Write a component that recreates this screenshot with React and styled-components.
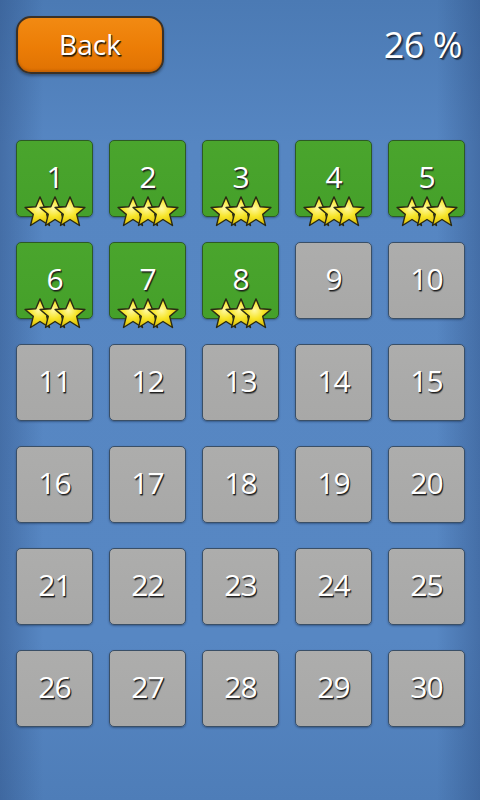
import React from "react";
import styled, { createGlobalStyle } from "styled-components";

const Global = createGlobalStyle`
  html, body { margin: 0; padding: 0; }
  body { background: #4a76b0; }
`;

const Screen = styled.div`
  width: 480px;
  height: 800px;
  box-sizing: border-box;
  padding: 16px 16px 0 16px;
  font-family: "Open Sans", "DejaVu Sans", sans-serif;
  background:
    linear-gradient(90deg, rgba(35, 65, 115, 0.35) 0%, rgba(35, 65, 115, 0) 9%, rgba(35, 65, 115, 0) 91%, rgba(35, 65, 115, 0.35) 100%),
    linear-gradient(180deg, #4b7ab4 0%, #5686c2 18%, #5787c3 80%, #4e7db8 100%);
  overflow: hidden;
`;

const Header = styled.div`
  display: flex;
  align-items: center;
  justify-content: space-between;
  height: 58px;
`;

const BackButton = styled.button`
  width: 148px;
  height: 58px;
  box-sizing: border-box;
  border: 2px solid #3b3126;
  border-radius: 15px;
  background: linear-gradient(180deg, #f28a12 0%, #ec7d06 55%, #e07203 100%);
  box-shadow: 0 2px 3px rgba(0, 0, 0, 0.35), inset 0 -2px 2px rgba(120, 50, 0, 0.25);
  color: #ffffff;
  font-family: inherit;
  font-size: 28px;
  padding: 0 0 2px 0;
  text-shadow: 1px 1px 0 #2a1a08, 1px 2px 1px rgba(0, 0, 0, 0.6);
  cursor: pointer;
`;

const Percent = styled.div`
  color: #ffffff;
  font-size: 36px;
  letter-spacing: -0.5px;
  margin-right: 2px;
  padding-bottom: 2px;
  text-shadow: 1px 1px 0 #1d2d45, 2px 2px 1px rgba(0, 0, 0, 0.5);
`;

const Grid = styled.div`
  margin-top: 66px;
  display: grid;
  grid-template-columns: repeat(5, 77px);
  grid-auto-rows: 77px;
  column-gap: 16px;
  row-gap: 25px;
`;

const Tile = styled.div`
  position: relative;
  box-sizing: border-box;
  border: 1.5px solid ${(p) => (p.$done ? "#2d5a24" : "#3a4f66")};
  border-radius: 5px;
  background: ${(p) =>
    p.$done
      ? "linear-gradient(180deg, #4aa52d 0%, #45a02a 100%)"
      : "linear-gradient(180deg, #adadac 0%, #a8a8a7 100%)"};
  box-shadow: 0 1px 2px rgba(20, 40, 70, 0.45);
  display: flex;
  align-items: center;
  justify-content: center;
`;

const Num = styled.span`
  color: #ffffff;
  font-size: 30px;
  margin-top: -4px;
  text-shadow: 1px 1px 0 #222, 1px 2px 1px rgba(0, 0, 0, 0.45);
  letter-spacing: -1px;
`;

const Stars = styled.div`
  position: absolute;
  left: 50%;
  bottom: -11px;
  transform: translateX(-50%);
  display: flex;
`;

const StarSvg = styled.svg`
  width: 32px;
  height: 31px;
  margin-left: ${(p) => (p.$first ? "0" : "-17px")};
`;

const Star = ({ first, id }) => (
  <StarSvg $first={first} viewBox="0 0 30 29">
    <defs>
      <radialGradient id={id} cx="45%" cy="40%" r="65%">
        <stop offset="0%" stopColor="#fff9a0" />
        <stop offset="45%" stopColor="#f7e52a" />
        <stop offset="100%" stopColor="#d8b800" />
      </radialGradient>
    </defs>
    <path
      d="M15 0.8 L18.9 10 L29 10.7 L21.3 17.2 L23.9 27.6 L15 22 L6.1 27.6 L8.7 17.2 L1 10.7 L11.1 10 Z"
      fill={`url(#${id})`}
      stroke="#2a2a14"
      strokeWidth="1.3"
      strokeLinejoin="round"
    />
  </StarSvg>
);

export default function App() {
  const levels = Array.from({ length: 30 }, (_, i) => i + 1);
  return (
    <>
      <Global />
      <Screen>
        <Header>
          <BackButton>Back</BackButton>
          <Percent>26 %</Percent>
        </Header>
        <Grid>
          {levels.map((n) => {
            const done = n <= 8;
            return (
              <Tile key={n} $done={done}>
                <Num>{n}</Num>
                {done && (
                  <Stars>
                    <Star first id={`s${n}a`} />
                    <Star id={`s${n}b`} />
                    <Star id={`s${n}c`} />
                  </Stars>
                )}
              </Tile>
            );
          })}
        </Grid>
      </Screen>
    </>
  );
}
